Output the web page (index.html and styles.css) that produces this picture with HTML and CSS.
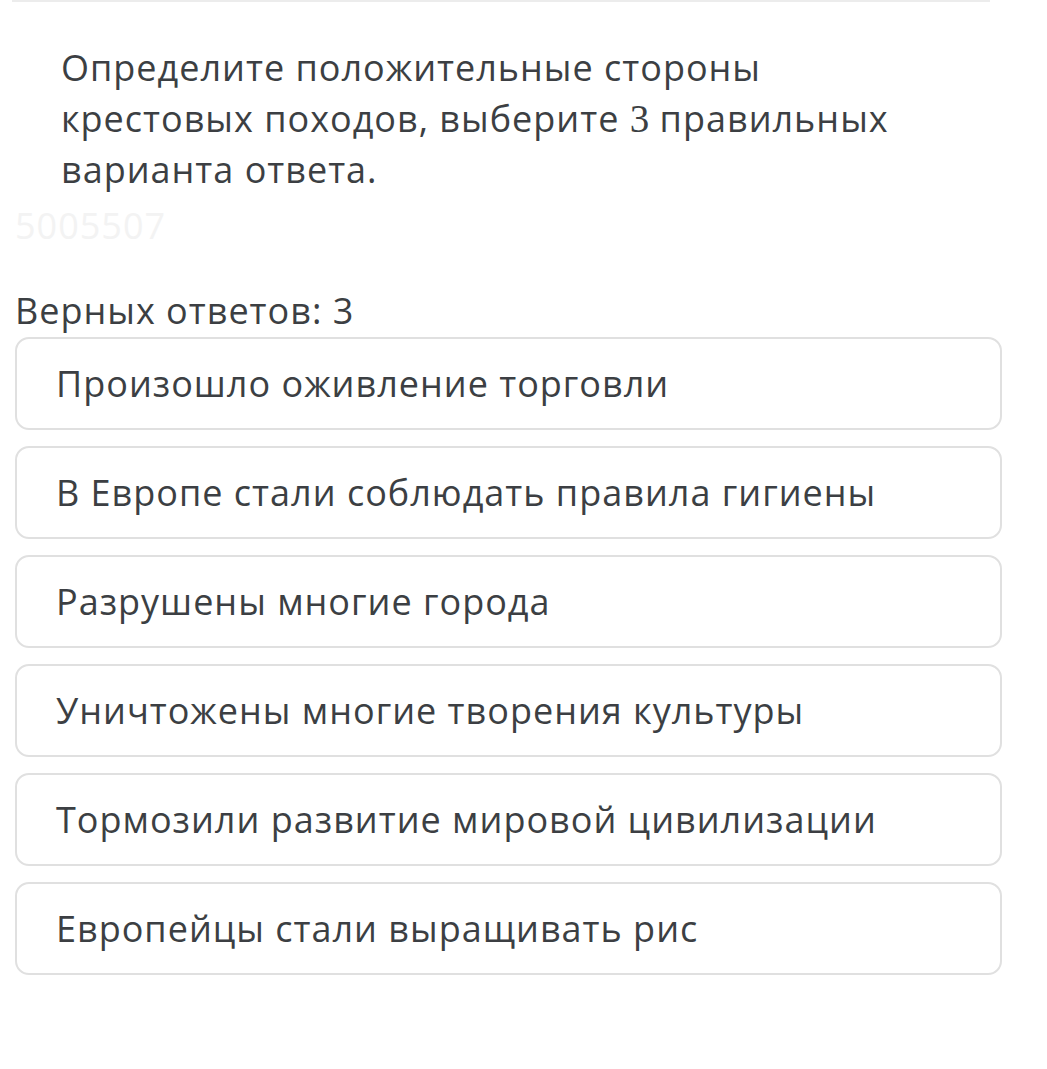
FILE: index.html
```html
<!DOCTYPE html>
<html lang="ru">
<head>
    <meta charset="UTF-8">
    <meta name="viewport" content="width=device-width, initial-scale=1.0">
    <title>Тест</title>
    <link rel="stylesheet" href="styles.css">
</head>
<body>
    <div class="page">
        <div class="top-line"></div>
        <div class="question">
            Определите положительные стороны крестовых походов, выберите <span class="math">3</span> правильных варианта ответа.
        </div>
        <div class="qid">5005507</div>
        <div class="count">Верных ответов: 3</div>
        <div class="options">
            <div class="option">Произошло оживление торговли</div>
            <div class="option">В Европе стали соблюдать правила гигиены</div>
            <div class="option">Разрушены многие города</div>
            <div class="option">Уничтожены многие творения культуры</div>
            <div class="option">Тормозили развитие мировой цивилизации</div>
            <div class="option">Европейцы стали выращивать рис</div>
        </div>
    </div>
</body>
</html>
```

FILE: styles.css
```css
body {
    margin: 0;
    background: #fff;
    font-family: "Open Sans", "Noto Sans", sans-serif;
    color: #3c3f43;
    font-size: 36px;
    letter-spacing: 1px;
}
.page {
    padding: 0 45px 0 15px;
}
.top-line {
    height: 2px;
    margin: 0 12px 0 -3px;
    background: #ececec;
}
.question {
    padding: 40px 0 0 46px;
    line-height: 51px;
    max-width: 840px;
}
.math {
    font-family: "Liberation Serif", serif;
    font-size: 39px;
    letter-spacing: 0;
}
.qid {
    line-height: 46px;
    color: #f3f3f3;
    margin-top: 8px;
}
.count {
    line-height: 46px;
    margin-top: 39px;
}
.options {
    display: flex;
    flex-direction: column;
    gap: 16px;
    margin-top: 3px;
}
.option {
    height: 89px;
    border: 2px solid #e0e0e0;
    border-radius: 14px;
    padding: 0 39px;
    display: flex;
    align-items: center;
}
```
